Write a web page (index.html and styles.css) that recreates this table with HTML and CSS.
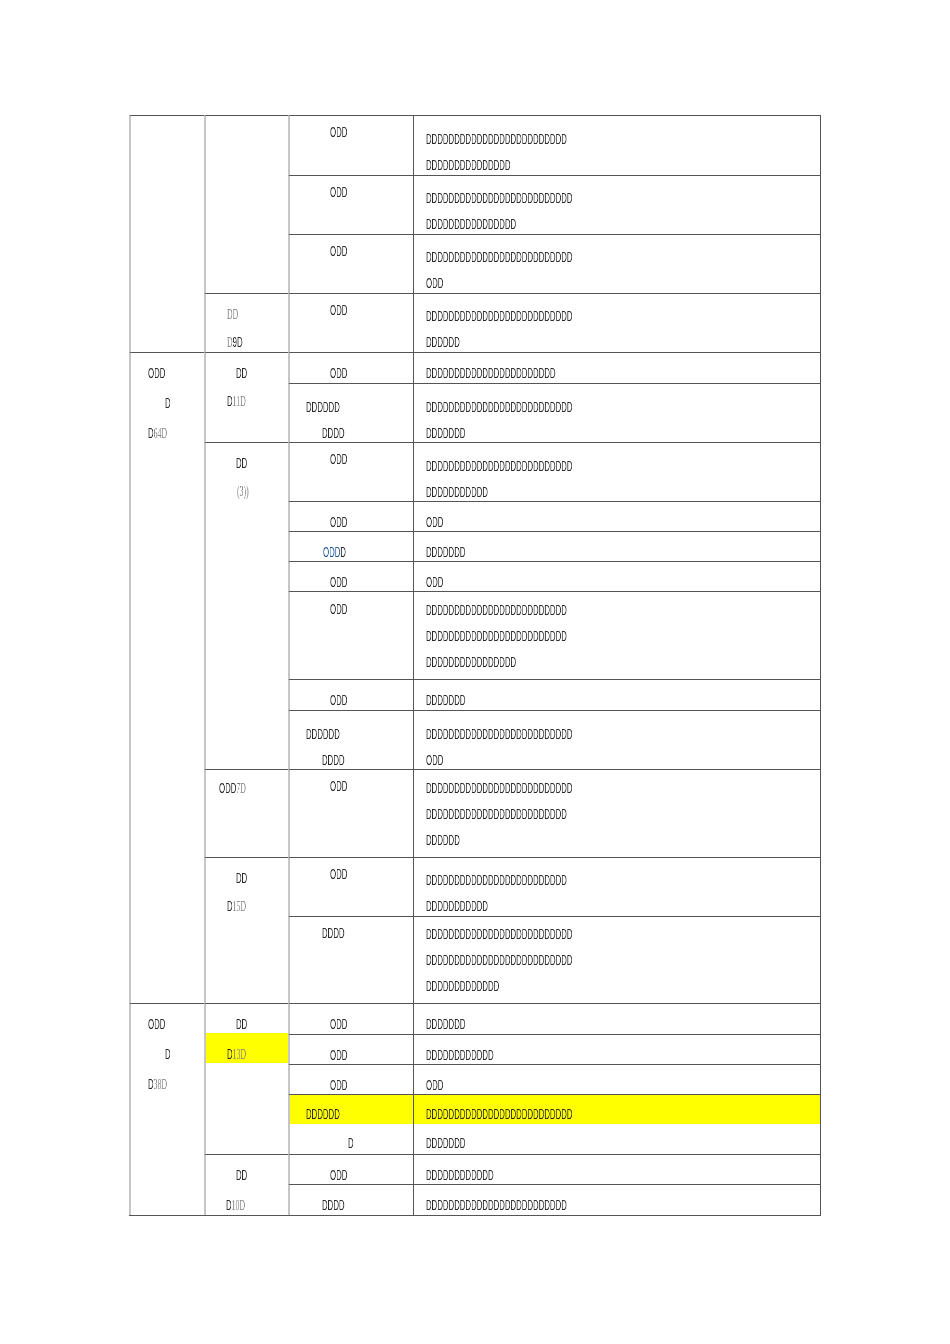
FILE: index.html
```html
<!DOCTYPE html>
<html lang="en">
<head>
<meta charset="utf-8">
<title>Table</title>
<link rel="stylesheet" href="styles.css">
</head>
<body>
<div class="sheet">
  <!-- row 1 -->
  <div class="cell c1 s4"></div>
  <div class="cell c2 s3"></div>
  <div class="cell c3 t3"><div class="ln p40"><span class="t">ODD</span></div></div>
  <div class="cell c4 t10"><div class="ln p12"><span class="t">DDDDDDDDDDDDDDDDDDDDDDDDD</span></div><div class="ln p12"><span class="t">DDDDDDDDDDDDDDD</span></div></div>
  <!-- row 2 -->
  <div class="cell c3 t3"><div class="ln p40"><span class="t">ODD</span></div></div>
  <div class="cell c4 t9"><div class="ln p12"><span class="t">DDDDDDDDDDDDDDDDDDDDDDDDDD</span></div><div class="ln p12"><span class="t">DDDDDDDDDDDDDDDD</span></div></div>
  <!-- row 3 -->
  <div class="cell c3 t3"><div class="ln p40"><span class="t">ODD</span></div></div>
  <div class="cell c4 t9"><div class="ln p12"><span class="t">DDDDDDDDDDDDDDDDDDDDDDDDDD</span></div><div class="ln p12"><span class="t">ODD</span></div></div>
  <!-- row 4 -->
  <div class="cell c2 t6"><div class="l28 p21"><span class="t"><span class="g">DD</span></span></div><div class="l28 p21"><span class="t"><span class="g">D</span>9D</span></div></div>
  <div class="cell c3 t3"><div class="ln p40"><span class="t">ODD</span></div></div>
  <div class="cell c4 t9"><div class="ln p12"><span class="t">DDDDDDDDDDDDDDDDDDDDDDDDDD</span></div><div class="ln p12"><span class="t">DDDDDD</span></div></div>
  <!-- row 5 -->
  <div class="cell c1 s12 t5"><div class="l30 p17"><span class="t">ODD</span></div><div class="l30 p34"><span class="t">D</span></div><div class="l30 p17"><span class="t">D<span class="g">64D</span></span></div></div>
  <div class="cell c2 s2 t6"><div class="l28 p30"><span class="t">DD</span></div><div class="l28 p21"><span class="t">D<span class="g">11D</span></span></div></div>
  <div class="cell c3 t7"><div class="ln p40"><span class="t">ODD</span></div></div>
  <div class="cell c4 t7"><div class="ln p12"><span class="t">DDDDDDDDDDDDDDDDDDDDDDD</span></div></div>
  <!-- row 6 -->
  <div class="cell c3 t10"><div class="ln p16"><span class="t">DDDDDD</span></div><div class="ln p32"><span class="t">DDDD</span></div></div>
  <div class="cell c4 t10"><div class="ln p12"><span class="t">DDDDDDDDDDDDDDDDDDDDDDDDDD</span></div><div class="ln p12"><span class="t">DDDDDDD</span></div></div>
  <!-- row 7 -->
  <div class="cell c2 s7 t6"><div class="l28 p30"><span class="t">DD</span></div><div class="l28 p31"><span class="t"><span class="g">(3))</span></span></div></div>
  <div class="cell c3 t3"><div class="ln p40"><span class="t">ODD</span></div></div>
  <div class="cell c4 t10"><div class="ln p12"><span class="t">DDDDDDDDDDDDDDDDDDDDDDDDDD</span></div><div class="ln p12"><span class="t">DDDDDDDDDDD</span></div></div>
  <!-- row 8 -->
  <div class="cell c3 t7"><div class="ln p40"><span class="t">ODD</span></div></div>
  <div class="cell c4 t7"><div class="ln p12"><span class="t">ODD</span></div></div>
  <!-- row 9 -->
  <div class="cell c3 t7"><div class="ln p33"><span class="t"><span class="b">ODD</span>D</span></div></div>
  <div class="cell c4 t7"><div class="ln p12"><span class="t">DDDDDDD</span></div></div>
  <!-- row 10 -->
  <div class="cell c3 t7"><div class="ln p40"><span class="t">ODD</span></div></div>
  <div class="cell c4 t7"><div class="ln p12"><span class="t">ODD</span></div></div>
  <!-- row 11 -->
  <div class="cell c3 t4"><div class="ln p40"><span class="t">ODD</span></div></div>
  <div class="cell c4 t5"><div class="ln p12"><span class="t">DDDDDDDDDDDDDDDDDDDDDDDDD</span></div><div class="ln p12"><span class="t">DDDDDDDDDDDDDDDDDDDDDDDDD</span></div><div class="ln p12"><span class="t">DDDDDDDDDDDDDDDD</span></div></div>
  <!-- row 12 -->
  <div class="cell c3 t7"><div class="ln p40"><span class="t">ODD</span></div></div>
  <div class="cell c4 t7"><div class="ln p12"><span class="t">DDDDDDD</span></div></div>
  <!-- row 13 -->
  <div class="cell c3 t10"><div class="ln p16"><span class="t">DDDDDD</span></div><div class="ln p32"><span class="t">DDDD</span></div></div>
  <div class="cell c4 t10"><div class="ln p12"><span class="t">DDDDDDDDDDDDDDDDDDDDDDDDDD</span></div><div class="ln p12"><span class="t">ODD</span></div></div>
  <!-- row 14 -->
  <div class="cell c2 t5"><div class="ln p13"><span class="t">ODD<span class="g">7D</span></span></div></div>
  <div class="cell c3 t3"><div class="ln p40"><span class="t">ODD</span></div></div>
  <div class="cell c4 t5"><div class="ln p12"><span class="t">DDDDDDDDDDDDDDDDDDDDDDDDDD</span></div><div class="ln p12"><span class="t">DDDDDDDDDDDDDDDDDDDDDDDDD</span></div><div class="ln p12"><span class="t">DDDDDD</span></div></div>
  <!-- row 15 -->
  <div class="cell c2 s2 t6"><div class="l28 p30"><span class="t">DD</span></div><div class="l28 p21"><span class="t">D<span class="g">15D</span></span></div></div>
  <div class="cell c3 t3"><div class="ln p40"><span class="t">ODD</span></div></div>
  <div class="cell c4 t9"><div class="ln p12"><span class="t">DDDDDDDDDDDDDDDDDDDDDDDDD</span></div><div class="ln p12"><span class="t">DDDDDDDDDDD</span></div></div>
  <!-- row 16 -->
  <div class="cell c3 t3"><div class="ln p32"><span class="t">DDDD</span></div></div>
  <div class="cell c4 t4"><div class="ln p12"><span class="t">DDDDDDDDDDDDDDDDDDDDDDDDDD</span></div><div class="ln p12"><span class="t">DDDDDDDDDDDDDDDDDDDDDDDDDD</span></div><div class="ln p12"><span class="t">DDDDDDDDDDDDD</span></div></div>
  <!-- row 17 -->
  <div class="cell c1 s6 t5"><div class="l30 p17"><span class="t">ODD</span></div><div class="l30 p34"><span class="t">D</span></div><div class="l30 p17"><span class="t">D<span class="g">38D</span></span></div></div>
  <div class="cell c2 s4"><div class="y1 p30"><span class="t">DD</span></div><div class="y2 hl p21"><span class="t">D<span class="g">13D</span></span></div></div>
  <div class="cell c3 t7"><div class="ln p40"><span class="t">ODD</span></div></div>
  <div class="cell c4 t7"><div class="ln p12"><span class="t">DDDDDDD</span></div></div>
  <!-- row 18 -->
  <div class="cell c3 t7"><div class="ln p40"><span class="t">ODD</span></div></div>
  <div class="cell c4 t7"><div class="ln p12"><span class="t">DDDDDDDDDDDD</span></div></div>
  <!-- row 19 -->
  <div class="cell c3 t7"><div class="ln p40"><span class="t">ODD</span></div></div>
  <div class="cell c4 t7"><div class="ln p12"><span class="t">ODD</span></div></div>
  <!-- row 20 -->
  <div class="cell c3"><div class="y3 hl p16"><span class="t">DDDDDD</span></div><div class="y4 p58"><span class="t">D</span></div></div>
  <div class="cell c4"><div class="y3 hl p12"><span class="t">DDDDDDDDDDDDDDDDDDDDDDDDDD</span></div><div class="y4 p12"><span class="t">DDDDDDD</span></div></div>
  <!-- row 21 -->
  <div class="cell c2 s2 t5"><div class="l30 p30"><span class="t">DD</span></div><div class="l30 p20"><span class="t">D<span class="g">10D</span></span></div></div>
  <div class="cell c3 t7"><div class="ln p40"><span class="t">ODD</span></div></div>
  <div class="cell c4 t7"><div class="ln p12"><span class="t">DDDDDDDDDDDD</span></div></div>
  <!-- row 22 -->
  <div class="cell c3 t7"><div class="ln p32"><span class="t">DDDD</span></div></div>
  <div class="cell c4 t7"><div class="ln p12"><span class="t">DDDDDDDDDDDDDDDDDDDDDDDDD</span></div></div>
</div>
</body>
</html>
```

FILE: styles.css
```css
html, body {
  margin: 0;
  padding: 0;
  background: #ffffff;
}

.sheet {
  display: grid;
  grid-template-columns: 75px 84px 125px 407px;
  grid-template-rows: 60px 59px 59px 59px 31px 59px 59px 30px 30px 30px 88px 31px 59px 88px 59px 87px 31px 30px 30px 60px 30px 31px;
  width: max-content;
  margin: 115px 0 0 129px;
  border-right: 1px solid #555555;
  border-bottom: 1px solid #555555;
  font-family: "Liberation Sans", Arial, sans-serif;
  font-size: 15px;
  color: #2a2a2a;
  -webkit-font-smoothing: antialiased;
}

.cell {
  box-sizing: border-box;
  border-top: 1px solid #555555;
  min-width: 0;
  min-height: 0;
}

.c1, .c2, .c3 { border-left: 2px solid #c6c6c6; }
.c4 { border-left: 1px solid #555555; }

.s2 { grid-row: span 2; }
.s3 { grid-row: span 3; }
.s4 { grid-row: span 4; }
.s6 { grid-row: span 6; }
.s7 { grid-row: span 7; }
.s12 { grid-row: span 12; }

.t3 { padding-top: 3px; }
.t4 { padding-top: 4px; }
.t5 { padding-top: 5px; }
.t6 { padding-top: 6px; }
.t7 { padding-top: 7px; }
.t9 { padding-top: 9px; }
.t10 { padding-top: 10px; }

.ln, .l28, .l30, .y1, .y2, .y3, .y4 {
  white-space: nowrap;
  box-sizing: border-box;
}
.ln { line-height: 26px; height: 26px; }
.l28 { line-height: 28px; height: 28px; }
.l30 { line-height: 30px; height: 30px; }

.y1 { height: 29px; padding-top: 7px; line-height: 26px; }
.y2 { height: 30px; padding-top: 8px; line-height: 26px; }
.y3 { height: 29px; padding-top: 6px; line-height: 26px; }
.y4 { height: 31px; padding-top: 6px; line-height: 26px; }

.hl { background: #ffff00; }

.p12 { padding-left: 12px; }
.p13 { padding-left: 13px; }
.p16 { padding-left: 16px; }
.p17 { padding-left: 17px; }
.p20 { padding-left: 20px; }
.p21 { padding-left: 21px; }
.p30 { padding-left: 30px; }
.p31 { padding-left: 31px; }
.p32 { padding-left: 32px; }
.p33 { padding-left: 33px; }
.p34 { padding-left: 34px; }
.p40 { padding-left: 40px; }
.p58 { padding-left: 58px; }

.t {
  display: inline-block;
  transform: scaleX(0.52);
  transform-origin: 0 50%;
  will-change: transform;
}

.g {
  font-family: "Liberation Serif", "Times New Roman", serif;
  color: #858585;
}

.b { color: #1f5a96; }
```
